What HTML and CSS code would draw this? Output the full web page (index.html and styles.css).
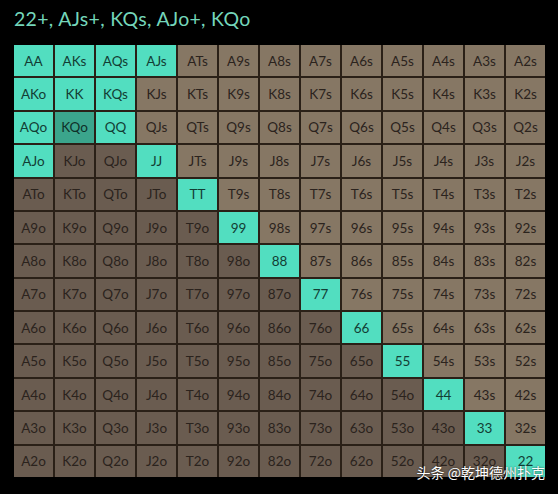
FILE: index.html
```html
<!DOCTYPE html>
<html lang="zh">
<head>
    <meta charset="UTF-8">
    <meta name="viewport" content="width=device-width, initial-scale=1.0">
    <title>Rango de manos</title>
    <link rel="stylesheet" href="styles.css">
</head>
<body>

    <div class="board">
        <h1 class="rango">22+, AJs+, KQs, AJo+, KQo</h1>
        <div class="grid" id="grid"></div>
        <div class="marca">头条 @乾坤德州扑克</div>
    </div>

    <script>
        const RANKS = 'AKQJT98765432'.split('');
        const ELEGIDAS = ['AKs', 'AQs', 'AJs', 'KQs', 'AKo', 'AQo', 'AJo'];
        const MARCADA = 'KQo';

        function armarGrilla() {
            let html = '';
            RANKS.forEach((r, i) => {
                RANKS.forEach((c, j) => {
                    let mano, tipo;
                    if (i === j) { mano = r + c; tipo = 'par'; }
                    else if (j > i) { mano = r + c + 's'; tipo = 'suited'; }
                    else { mano = c + r + 'o'; tipo = 'off'; }

                    let clase = 'celda ' + tipo;
                    if (tipo === 'par' || ELEGIDAS.includes(mano)) clase += ' on';
                    if (mano === MARCADA) clase += ' on marcada';

                    html += `<div class="${clase}">${mano}</div>`;
                });
            });
            document.getElementById('grid').innerHTML = html;
        }

        armarGrilla();
    </script>
</body>
</html>
```

FILE: styles.css
```css
:root { --teal: #52dec0; --teal-dark: #3ba58c; --suited: #867764; --off: #6a5c50; --linea: #2a2017; }
body { margin: 0; background: #000; font-family: 'Lato', 'Noto Sans CJK SC', sans-serif; }

.board { position: relative; width: 558px; height: 494px; background: #000; padding: 0 13px 0 14px; box-sizing: border-box; }

.rango { margin: 0; padding-top: 7px; height: 45px; box-sizing: border-box; font-size: 19.5px; font-weight: normal; line-height: 24px; color: #74d6ba; letter-spacing: 0.3px; }

/* GRILLA 13x13 */
.grid {
    display: grid;
    grid-template-columns: repeat(13, 1fr);
    grid-template-rows: repeat(13, 1fr);
    gap: 2px;
    height: 432px;
    background: var(--linea);
}
.celda { display: flex; align-items: center; justify-content: center; font-size: 13.5px; color: #2b231d; }
.suited { background: var(--suited); }
.off { background: var(--off); }
.on { background: var(--teal); color: #123d34; }
.marcada { background: var(--teal-dark); color: #0f3029; }

/* MARCA DE AGUA */
.marca {
    position: absolute;
    right: 13px; bottom: 12px;
    font-family: 'Noto Sans CJK SC', sans-serif;
    font-size: 14px;
    color: #fff;
    text-shadow: 0 0 2px rgba(0,0,0,0.8);
}
```
